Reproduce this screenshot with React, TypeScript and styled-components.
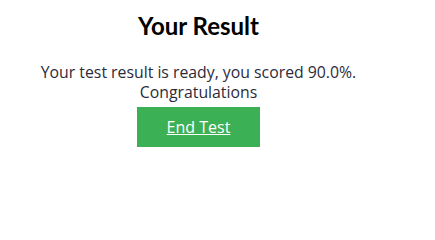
import styled, { createGlobalStyle } from "styled-components";

const GlobalStyle = createGlobalStyle`
  body {
    margin: 0;
    background: #fff;
    font-family: "Open Sans", "Lato", sans-serif;
  }
`;

export default function App() {
  return (
    <>
      <GlobalStyle />
      <ResultPanel>
        <Title>Your Result</Title>
        <Message>
          Your test result is ready, you scored 90.0%.
          <br />
          Congratulations
        </Message>
        <EndButton href="#">End Test</EndButton>
      </ResultPanel>
    </>
  );
}

const ResultPanel = styled.div`
  width: 397px;
  display: flex;
  flex-direction: column;
  align-items: center;
  padding-top: 12px;
`;

const Title = styled.h2`
  margin: 0;
  font-family: "Lato", sans-serif;
  font-size: 24px;
  font-weight: 700;
  line-height: 28px;
  color: #000;
`;

const Message = styled.p`
  margin: 22px 0 5px;
  font-size: 15.8px;
  line-height: 20px;
  color: #2b2b3b;
  text-align: center;
`;

const EndButton = styled.a`
  width: 123px;
  height: 40px;
  display: flex;
  align-items: center;
  justify-content: center;
  background: #3cb054;
  color: #fff;
  font-size: 16px;
  text-decoration: underline;
`;
